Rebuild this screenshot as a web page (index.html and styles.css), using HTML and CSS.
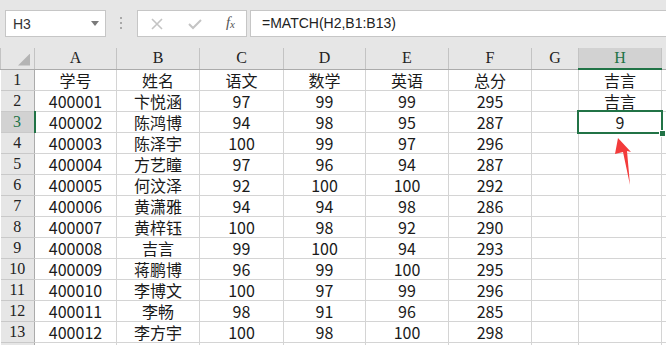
FILE: index.html
```html
<!DOCTYPE html>
<html lang="zh-CN">
<head>
    <meta charset="UTF-8">
    <title>MATCH</title>
    <link rel="stylesheet" href="styles.css">
</head>
<body>
    <div class="bar">
        <div class="namebox"><span>H3</span><span class="caret"></span></div>
        <div class="dots"><i></i><i></i><i></i></div>
        <div class="fbtns">
            <svg class="ico" width="14" height="14" viewBox="0 0 14 14"><path d="M2 2L12 12M12 2L2 12" stroke="#c4c4c4" stroke-width="1.6" fill="none"/></svg>
            <svg class="ico" width="16" height="14" viewBox="0 0 16 14"><path d="M2 7L6 11L14 3" stroke="#c4c4c4" stroke-width="2" fill="none"/></svg>
            <span class="fx">f<sub>x</sub></span>
        </div>
        <div class="formula">=MATCH(H2,B1:B13)</div>
    </div>

    <table class="grid">
        <colgroup>
            <col class="c-rh"><col class="c-a"><col class="c-b"><col class="c-c"><col class="c-d">
            <col class="c-e"><col class="c-f"><col class="c-g"><col class="c-h"><col class="c-i">
        </colgroup>
        <tr class="hdr">
            <th class="corner"><span class="tri"></span></th>
            <th>A</th><th>B</th><th>C</th><th>D</th><th>E</th><th>F</th><th>G</th><th class="colsel">H</th><th></th>
        </tr>
        <tr><th class="rh">1</th><td>学号</td><td>姓名</td><td>语文</td><td>数学</td><td>英语</td><td>总分</td><td></td><td>吉言</td><td></td></tr>
        <tr><th class="rh">2</th><td>400001</td><td>卞悦涵</td><td>97</td><td>99</td><td>99</td><td>295</td><td></td><td>吉言</td><td></td></tr>
        <tr><th class="rh rowsel">3</th><td>400002</td><td>陈鸿博</td><td>94</td><td>98</td><td>95</td><td>287</td><td></td><td class="sel">9</td><td></td></tr>
        <tr><th class="rh">4</th><td>400003</td><td>陈泽宇</td><td>100</td><td>99</td><td>97</td><td>296</td><td></td><td></td><td></td></tr>
        <tr><th class="rh">5</th><td>400004</td><td>方艺瞳</td><td>97</td><td>96</td><td>94</td><td>287</td><td></td><td></td><td></td></tr>
        <tr><th class="rh">6</th><td>400005</td><td>何汶泽</td><td>92</td><td>100</td><td>100</td><td>292</td><td></td><td></td><td></td></tr>
        <tr><th class="rh">7</th><td>400006</td><td>黄潇雅</td><td>94</td><td>94</td><td>98</td><td>286</td><td></td><td></td><td></td></tr>
        <tr><th class="rh">8</th><td>400007</td><td>黄梓钰</td><td>100</td><td>98</td><td>92</td><td>290</td><td></td><td></td><td></td></tr>
        <tr><th class="rh">9</th><td>400008</td><td>吉言</td><td>99</td><td>100</td><td>94</td><td>293</td><td></td><td></td><td></td></tr>
        <tr><th class="rh">10</th><td>400009</td><td>蒋鹏博</td><td>96</td><td>99</td><td>100</td><td>295</td><td></td><td></td><td></td></tr>
        <tr><th class="rh">11</th><td>400010</td><td>李博文</td><td>100</td><td>97</td><td>99</td><td>296</td><td></td><td></td><td></td></tr>
        <tr><th class="rh">12</th><td>400011</td><td>李畅</td><td>98</td><td>91</td><td>96</td><td>285</td><td></td><td></td><td></td></tr>
        <tr><th class="rh">13</th><td>400012</td><td>李方宇</td><td>100</td><td>98</td><td>100</td><td>298</td><td></td><td></td><td></td></tr>
        <tr><th class="rh"></th><td></td><td></td><td></td><td></td><td></td><td></td><td></td><td></td><td></td></tr>
    </table>

    <!-- red arrow pointing at the result -->
    <svg class="arrow" width="30" height="52" viewBox="0 0 30 52">
        <polygon points="10,2 23,16 19,15 22,49 15,16 7,18" fill="#f33b3b"/>
    </svg>
</body>
</html>
```

FILE: styles.css
```css
html, body {
    margin: 0;
    width: 666px;
    height: 345px;
    overflow: hidden;
    background: #fff;
}
body {
    font-family: "Noto Sans CJK SC", sans-serif;
    color: #1a1a1a;
}

.bar {
    height: 48px;
    box-sizing: border-box;
    padding-top: 10px;
    background: #e6e6e6;
    display: flex;
    align-items: flex-start;
}
.namebox {
    margin-left: 5px;
    width: 101px;
    height: 27px;
    box-sizing: border-box;
    border: 1px solid #c6c6c6;
    background: #fff;
    display: flex;
    align-items: center;
    justify-content: space-between;
    padding: 0 6px 0 7px;
    font: 14px "Liberation Sans", sans-serif;
    color: #333;
}
.caret {
    width: 0;
    height: 0;
    border-left: 4px solid transparent;
    border-right: 4px solid transparent;
    border-top: 5px solid #7a7a7a;
}
.dots {
    margin: 7px 0 0 14px;
    width: 3px;
    display: flex;
    flex-direction: column;
    gap: 3px;
}
.dots i {
    display: block;
    width: 2px;
    height: 2px;
    background: #a8a8a8;
}
.fbtns {
    margin-left: 14px;
    width: 110px;
    height: 27px;
    box-sizing: border-box;
    border: 1px solid #c6c6c6;
    background: #fff;
    display: flex;
    align-items: center;
    justify-content: space-between;
    padding: 0 11px 0 12px;
}
.fx {
    font: italic 15px "Liberation Serif", serif;
    color: #555;
    margin-top: -2px;
}
.fx sub {
    font-size: 11px;
    vertical-align: -1px;
}
.formula {
    margin-left: 3px;
    flex: 1;
    height: 27px;
    box-sizing: border-box;
    border: 1px solid #c6c6c6;
    border-right: none;
    background: #fff;
    padding-left: 11px;
    font: 14px/25px "Liberation Sans", sans-serif;
    color: #222;
}

.grid {
    border-collapse: collapse;
    table-layout: fixed;
    width: 761px;
}
.c-rh { width: 34px; }
.c-a { width: 82px; }
.c-b { width: 83px; }
.c-c { width: 84px; }
.c-d { width: 82px; }
.c-e { width: 83px; }
.c-f { width: 83px; }
.c-g { width: 47px; }
.c-h { width: 83px; }
.c-i { width: 100px; }

.grid th, .grid td {
    padding: 0;
    height: 20px;
    line-height: 20px;
    text-align: center;
    font-size: 16px;
    font-weight: normal;
    white-space: nowrap;
    overflow: hidden;
}
.grid td {
    border: 1px solid #d4d4d4;
}
.hdr th {
    background: #e6e6e6;
    border-left: 1px solid #c3c3c3;
    border-right: 1px solid #c3c3c3;
    border-bottom: 1px solid #ababab;
    font-family: "Liberation Serif", serif;
    color: #222;
}
.grid .rh {
    background: #e6e6e6;
    border-top: 1px solid #c9c9c9;
    border-bottom: 1px solid #c9c9c9;
    border-right: 1px solid #ababab;
    font-family: "Liberation Serif", serif;
    color: #222;
}
.corner {
    position: relative;
}
.tri {
    position: absolute;
    right: 4px;
    bottom: 3px;
    width: 12px;
    height: 12px;
    background: #b4b4b4;
    clip-path: polygon(100% 0, 100% 100%, 0 100%);
}
.hdr .colsel {
    background: #d2d2d2;
    color: #217346;
    border-bottom: 2px solid #217346;
}
.grid .rowsel {
    background: #d2d2d2;
    color: #217346;
    border-right: 2px solid #217346;
}
.grid .sel {
    position: relative;
    overflow: visible;
}
.sel::before {
    content: "";
    position: absolute;
    top: -2px;
    left: -2px;
    right: -2px;
    bottom: -2px;
    border: 2px solid #217346;
}
.sel::after {
    content: "";
    position: absolute;
    right: -5px;
    bottom: -5px;
    width: 5px;
    height: 5px;
    background: #217346;
    border: 1px solid #fff;
}

.arrow {
    position: absolute;
    left: 608px;
    top: 136px;
}
```
